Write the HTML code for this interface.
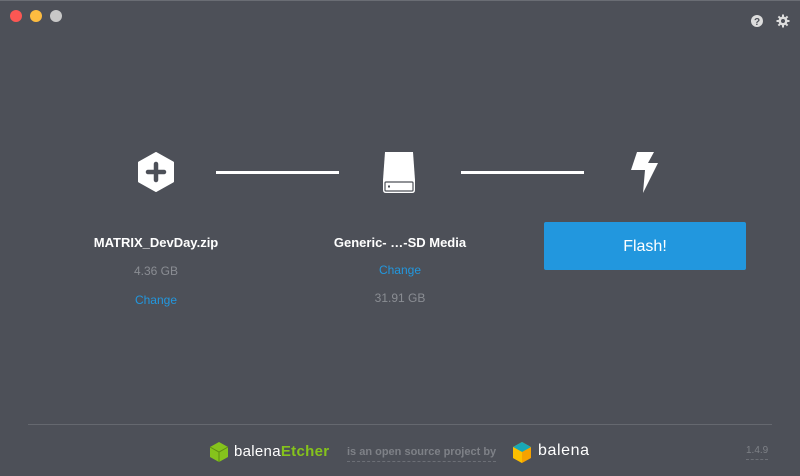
<!DOCTYPE html>
<html><head><style>
body{margin:0;width:800px;height:476px;background:#4d5058;font-family:"Liberation Sans",sans-serif;position:relative;overflow:hidden}
.a{position:absolute}
.dot{position:absolute;top:10px;width:12px;height:12px;border-radius:50%}
.t{position:absolute;text-align:center;width:200px}
</style></head><body>
<div class="a" style="left:0;top:0;width:800px;height:1px;background:#6a6d74"></div>
<div class="dot" style="left:10px;background:#fc5753"></div>
<div class="dot" style="left:30px;background:#fdbc40"></div>
<div class="dot" style="left:50px;background:#c8c8c8"></div>
<svg class="a" style="left:750px;top:14px" width="14" height="14" viewBox="0 0 14 14"><circle cx="7" cy="7" r="6" fill="#ddd"/><text x="7" y="11" font-size="10" font-weight="bold" text-anchor="middle" fill="#4d5058" font-family="Liberation Sans">?</text></svg>
<svg class="a" style="left:776px;top:14px" width="14" height="14" viewBox="0 0 14 14"><g fill="#ddd"><circle cx="7" cy="7" r="4.5"/><rect x="6" y="0.5" width="2" height="13"/><rect x="0.5" y="6" width="13" height="2"/><rect x="6" y="0.5" width="2" height="13" transform="rotate(45 7 7)"/><rect x="6" y="0.5" width="2" height="13" transform="rotate(-45 7 7)"/></g><circle cx="7" cy="7" r="2" fill="#4d5058"/></svg>

<svg class="a" style="left:136px;top:152px" width="40" height="40" viewBox="0 0 40 40"><path d="M20 1 L37 10.5 V29.5 L20 39 L3 29.5 V10.5Z" fill="#fff" stroke="#fff" stroke-linejoin="round" stroke-width="2"/><path d="M20 12V28M12 20H28" stroke="#4d5058" stroke-width="4.5" stroke-linecap="round"/></svg>
<div class="a" style="left:216px;top:171px;width:123px;height:3px;background:#fff"></div>
<svg class="a" style="left:378px;top:150px" width="42" height="44" viewBox="0 0 42 44"><path d="M7 2 H35 L37 30 V40 Q37 43 34 43 H8 Q5 43 5 40 V30Z" fill="#fff"/><rect x="7" y="32" width="28" height="9" rx="1" fill="none" stroke="#4d5058" stroke-width="1.2"/><rect x="10" y="35.5" width="2" height="2" fill="#4d5058"/></svg>
<div class="a" style="left:461px;top:171px;width:123px;height:3px;background:#fff"></div>
<svg class="a" style="left:628px;top:150px" width="32" height="44" viewBox="0 0 32 44"><path d="M9 2 H26 L20 13 H30 L15 43 L17 20 H3Z" fill="#fff"/></svg>

<div class="t" style="left:56px;top:235px;color:#fff;font-weight:bold;font-size:13px">MATRIX_DevDay.zip</div>
<div class="t" style="left:56px;top:264px;color:#8a8d93;font-size:12px">4.36 GB</div>
<div class="t" style="left:56px;top:293px;color:#2297de;font-size:12px">Change</div>
<div class="t" style="left:300px;top:235px;color:#fff;font-weight:bold;font-size:13px">Generic- …-SD Media</div>
<div class="t" style="left:300px;top:263px;color:#2297de;font-size:12px">Change</div>
<div class="t" style="left:300px;top:291px;color:#8a8d93;font-size:12px">31.91 GB</div>
<div class="a" style="left:544px;top:222px;width:202px;height:48px;background:#2297de;border-radius:2px;color:#fff;font-size:16px;line-height:50px;text-align:center">Flash!</div>

<div class="a" style="left:28px;top:424px;width:744px;height:1px;background:#65686f"></div>
<svg class="a" style="left:208px;top:441px" width="22" height="22" viewBox="0 0 22 22"><path d="M11 1 L20 6 V16 L11 21 L2 16 V6Z" fill="#85c31c"/><path d="M2 6 L11 11 L20 6 M11 11V21" stroke="#5d8c12" stroke-width="1" fill="none"/></svg>
<div class="a" style="left:234px;top:443px;font-size:15px;color:#fff;letter-spacing:0.3px">balena<span style="color:#85c31c;font-weight:bold">Etcher</span></div>
<div class="a" style="left:347px;top:446px;font-size:11px;color:#7e8187;font-weight:bold;border-bottom:1px dashed #6c6f76;padding-bottom:3px">is an open source project by</div>
<svg class="a" style="left:511px;top:441px" width="22" height="24" viewBox="0 0 22 24"><path d="M11 1 L20 6 V17 L11 22 L2 17 V6Z" fill="#f6a200"/><path d="M2 6 L11 1 L20 6 L11 11Z" fill="#19a8b6"/><path d="M11 11 V22 L2 17 V6Z" fill="#fcc000"/></svg>
<div class="a" style="left:538px;top:442px;font-size:16px;color:#fff;letter-spacing:0.6px">balena</div>
<div class="a" style="left:746px;top:445px;font-size:10px;color:#7e8187;border-bottom:1px dashed #6c6f76;padding-bottom:3px">1.4.9</div>
</body></html>
